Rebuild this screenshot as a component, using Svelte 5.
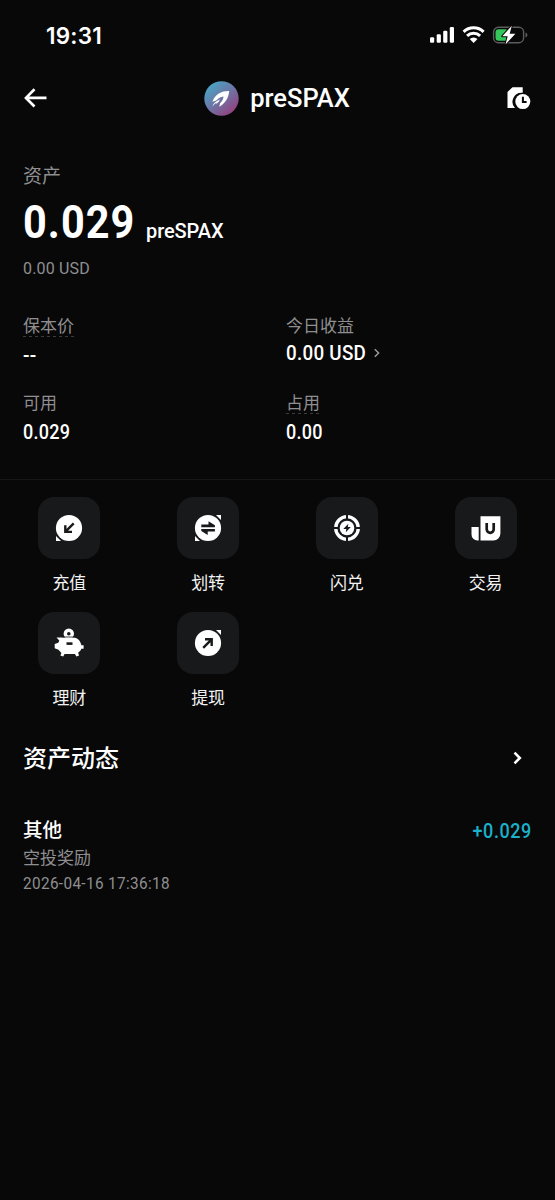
<script>
  const stats = [
    { label: '保本价', value: '--', hint: true, dash: true },
    { label: '今日收益', value: '0.00', unit: 'USD', link: true },
    { label: '可用', value: '0.029' },
    { label: '占用', value: '0.00', hint: true }
  ];
  const actions = [
    { id: 'deposit', label: '充值' },
    { id: 'transfer', label: '划转' },
    { id: 'convert', label: '闪兑' },
    { id: 'trade', label: '交易' },
    { id: 'earn', label: '理财' },
    { id: 'withdraw', label: '提现' }
  ];
</script>

<div class="screen">
  <div class="status">
    <span class="time">19:31</span>
    <svg width="100" height="20" viewBox="0 0 100 20">
      <g fill="#fff">
        <rect x="1" y="12.3" width="4.2" height="5.5" rx="1.2" />
        <rect x="7.7" y="9.3" width="4.2" height="8.5" rx="1.2" />
        <rect x="14.2" y="5.8" width="4.2" height="12" rx="1.2" />
        <rect x="20.8" y="2" width="4.2" height="15.8" rx="1.2" />
      </g>
      <g fill="none" stroke="#fff" stroke-width="3">
        <path d="M34.6 6.9a14.4 14.4 0 0 1 20 0" />
        <path d="M38.1 10.9a9.3 9.3 0 0 1 13 0" />
      </g>
      <path d="M40.7 14a5.7 5.7 0 0 1 7.8 0l-3.9 3.9z" fill="#fff" />
      <rect x="64.6" y="2.3" width="30" height="15.4" rx="4.8" fill="none" stroke="#5c5c5e" stroke-width="1.4" />
      <path d="M96.5 7.5c2.6.7 2.6 4.2 0 4.9z" fill="#5c5c5e" />
      <path d="M69.5 4.2h8.1v11.6h-8.1a3 3 0 0 1-3-3V7.200a3 3 0 0 1 3-3z" fill="#35c759" />
      <path d="M82.800 .8 73.300 11.200h5.400l-2.200 8.200 9.900-10.600h-5.700z" fill="#fff" stroke="#080808" stroke-width="2" paint-order="stroke" stroke-linejoin="round" />
    </svg>
  </div>

  <header>
    <svg class="back" width="24" height="20" viewBox="0 0 24 20" fill="none" stroke="#fff" stroke-width="2.700">
      <path d="M11.500 1.300 3 9.900l8.500 8.600M3 9.900h20.500" />
    </svg>
    <div class="title">
      <svg width="35" height="35" viewBox="0 0 35 35">
        <defs>
          <linearGradient id="coin" x1=".15" y1=".1" x2=".85" y2=".9">
            <stop offset="0" stop-color="#4aa3c4" />
            <stop offset=".5" stop-color="#6d75a5" />
            <stop offset="1" stop-color="#94407f" />
          </linearGradient>
        </defs>
        <circle cx="17.500" cy="17.500" r="17.200" fill="url(#coin)" />
        <path d="M25.200 10.100C17.500 9.900 11.500 13 8.400 20.700l3.900-1.200c2-2.300 4.200-3.600 7.200-4-.3 3-1.400 5-3.400 6.700l-.8 3.500c5.600-3 9.200-8 9.900-15.600z" fill="#fff" />
        <path d="M8.500 25.700c.9-3.300 3-5.300 7.400-7.100-.7 2-1.800 3.200-3.300 4.100l-.6-.8c-1.400.8-2.300 1.900-3.500 3.800z" fill="#fff" />
      </svg>
      <h1>preSPAX</h1>
    </div>
    <svg class="records" width="25" height="25" viewBox="0 0 25 25">
      <path d="M1.500 6 6.500 1.200h10.200v5.600A9 9 0 0 0 9 21.900H1.500z" fill="#fff" />
      <circle cx="16.800" cy="15.600" r="7.500" fill="#fff" />
      <path d="M16.900 10.800v5.100h3.700" fill="none" stroke="#080808" stroke-width="2" />
    </svg>
  </header>

  <section class="summary">
    <div class="caption">资产</div>
    <div class="balance"><strong><b>0.029</b></strong><span>preSPAX</span></div>
    <div class="fiat"><span class="narrow">0.00 USD</span></div>
    <div class="stats">
      {#each stats as s}
        <div class="stat">
          <div class="label"><span class:hint={s.hint}>{s.label}</span></div>
          <div class="value" class:dash={s.dash} class:link={s.link}>
            <span class="narrow">{s.value}{#if s.unit}&nbsp;{s.unit}{/if}</span>
            {#if s.link}
              <svg width="6" height="10" viewBox="0 0 6 10" fill="none" stroke="#9a9a9c" stroke-width="1.500"><path d="m.8 1.200 3.800 3.800L.8 8.800" /></svg>
            {/if}
          </div>
        </div>
      {/each}
    </div>
  </section>

  <nav>
    {#each actions as a}
      <div class="action">
        <div class="tile">
          <svg width="32" height="32" viewBox="0 0 32 32">
            {#if a.id === 'deposit'}
              <circle cx="16" cy="16" r="13.100" fill="#fff" />
              <path d="M3 24 8 29H3z" fill="#fff" />
              <path d="m20.700 11.400-8.200 8.200M12.300 13.300v6.600h6.700" fill="none" stroke="#18191b" stroke-width="2.400" />
            {:else if a.id === 'transfer'}
              <circle cx="16" cy="16" r="13.100" fill="#fff" />
              <path d="M3 24 8 29H3zM24 3H29v5z" fill="#fff" />
              <path d="M9.300 12.600h7.200V9.200l6.400 4.100v2H9.300zM22.900 17v2.400h-7.200V23l-6.400-4v-2z" fill="#18191b" />
            {:else if a.id === 'convert'}
              <circle cx="16" cy="16" r="11.300" fill="none" stroke="#fff" stroke-width="3.300" />
              <path d="M16 2v5M16 25v5M2 16h5M25 16h5" stroke="#18191b" stroke-width="2" />
              <circle cx="16" cy="16" r="7.300" fill="#fff" />
              <path d="m17.300 11.800-5 5.300h3l-.5 3.100 5-5.300h-3z" fill="#18191b" />
            {:else if a.id === 'trade'}
              <path d="M1.500 15h7.200v13.500H7.500a6 6 0 0 1-6-6zM10.500 4.200h19.900v17.300a7 7 0 0 1-7 7H10.500z" fill="#fff" />
              <path d="M16.700 11v6.300a3.500 3.500 0 0 0 7 0V11" fill="none" stroke="#18191b" stroke-width="2.700" />
            {:else if a.id === 'earn'}
              <circle cx="15.800" cy="6.800" r="5.200" fill="#fff" />
              <circle cx="15.800" cy="6.800" r="1.800" fill="#18191b" />
              <path d="M3.500 10.600h18c3.600.8 6.100 3.600 6.900 7.700h2.200v3.500h-2.300c-.5 1.700-1.600 2.900-3.200 3.900l1 2.800-2.700 1.100-1.500-2.700H11.500l-1.300 2.700-2.800-1.100 1-2.600-2.900-3.200-3.800-1.400v-4.200l3.600-1.300 1-2.400z" fill="#fff" />
              <path d="M9.200 10h13" stroke="#18191b" stroke-width=".8" />
              <path d="M13.500 16.600h6" stroke="#18191b" stroke-width="2.600" />
            {:else}
              <circle cx="16" cy="16" r="13.100" fill="#fff" />
              <path d="M24 3H29v5z" fill="#fff" />
              <path d="m11.200 20.800 8.200-8.200M13 12.300h6.700V19" fill="none" stroke="#18191b" stroke-width="2.400" />
            {/if}
          </svg>
        </div>
        <span>{a.label}</span>
      </div>
    {/each}
  </nav>

  <section class="activity">
    <div class="heading">
      <h2>资产动态</h2>
      <svg width="10" height="14" viewBox="0 0 10 14" fill="none" stroke="#fff" stroke-width="2.600"><path d="m1.500 1.700 5.300 5.300-5.300 5.300" /></svg>
    </div>
    <div class="entry">
      <div>
        <div class="kind">其他</div>
        <div class="note">空投奖励</div>
        <div class="date"><span class="narrow">2026-04-16 17:36:18</span></div>
      </div>
      <div class="amount"><span class="narrow">+0.029</span></div>
    </div>
  </section>
</div>

<style>
  :global(body) { background: #080808; }
  .screen {
    box-sizing: border-box;
    width: 555px;
    height: 1200px;
    overflow: hidden;
    background: #080808;
    color: #fff;
    font-family: Roboto, "Noto Sans CJK SC", sans-serif;
    white-space: nowrap;
  }
  svg { display: block; flex: none; }
  h1, h2 { margin: 0; }
  .status {
    display: flex;
    align-items: center;
    justify-content: space-between;
    height: 70px;
    padding: 0 26px 0 46px;
    box-sizing: border-box;
  }
  .time { padding-top: 2px; font: 600 22.500px/30px Inter, sans-serif; letter-spacing: .2px; }
  header {
    display: flex;
    align-items: center;
    justify-content: space-between;
    height: 56px;
    padding: 0 24px 0 23px;
  }
  .title { display: flex; align-items: center; gap: 11px; padding-left: 1px; }
  h1 { font-size: 25.500px; line-height: 36px; font-weight: 500; }
  .summary { box-sizing: border-box; height: 316px; margin-top: 38px; padding: 0 23px; border-bottom: 1px solid #161618; }
  .narrow { display: inline-block; transform: scaleX(.9); transform-origin: 0 50%; }
  .caption { font-size: 19px; line-height: 26px; color: #8f8f91; }
  .balance { display: flex; align-items: baseline; height: 64px; line-height: 64px; }
  .balance strong { width: 123px; font-size: 46px; }
  .balance b { display: inline-block; font-weight: 700; letter-spacing: 1.200px; transform: scaleX(.9); transform-origin: 0 50%; }
  .balance span { font-size: 20px; font-weight: 500; letter-spacing: -.1px; }
  .fiat { font-size: 17px; line-height: 28px; color: #8f8f91; letter-spacing: .2px; }
  .fiat .narrow { transform: scaleX(.94); }
  .stats { display: grid; grid-template-columns: 263px 1fr; grid-auto-rows: 77px; padding-top: 31px; }
  .label { height: 29px; font-size: 17px; line-height: 26px; color: #8f8f91; }
  .label span { display: inline-block; height: 24px; }
  .hint {
    background: repeating-linear-gradient(90deg, #3c3c3e 0 3px, transparent 3px 6px) 0 100% / 100% 1px no-repeat;
  }
  .value { display: flex; align-items: center; height: 26px; font-size: 20px; font-weight: 500; letter-spacing: .3px; }
  .value.link { margin-top: -2px; }
  .link .narrow { width: 88px; transform: scaleX(.94); }
  .dash .narrow { transform: scaleX(.95); }
  nav { display: grid; grid-template-columns: repeat(4, 1fr); grid-auto-rows: 115px; width: 555px; padding-top: 17px; }
  .action { display: flex; flex-direction: column; align-items: center; }
  .tile { display: grid; place-items: center; width: 62px; height: 62px; border-radius: 16px; background: #18191b; }
  .action span { margin-top: 11px; font-size: 17px; line-height: 26px; color: #f2f2f2; }
  .activity { padding: 0 23px; }
  .heading { display: flex; align-items: center; justify-content: space-between; height: 62px; padding-right: 9px; }
  h2 { padding-top: 1px; font-size: 24px; line-height: 36px; font-weight: 500; }
  .entry { display: flex; justify-content: space-between; padding-top: 28px; }
  .kind { font-size: 19.500px; font-weight: 500; line-height: 28px; }
  .note { font-size: 17px; line-height: 26px; color: #8f8f91; }
  .date { font-size: 17px; line-height: 25px; color: #8f8f91; letter-spacing: .4px; }
  .amount { font-size: 20px; line-height: 28px; font-weight: 500; color: #1bb1c9; letter-spacing: .6px; }
  .amount .narrow { transform-origin: 100% 50%; }
</style>
